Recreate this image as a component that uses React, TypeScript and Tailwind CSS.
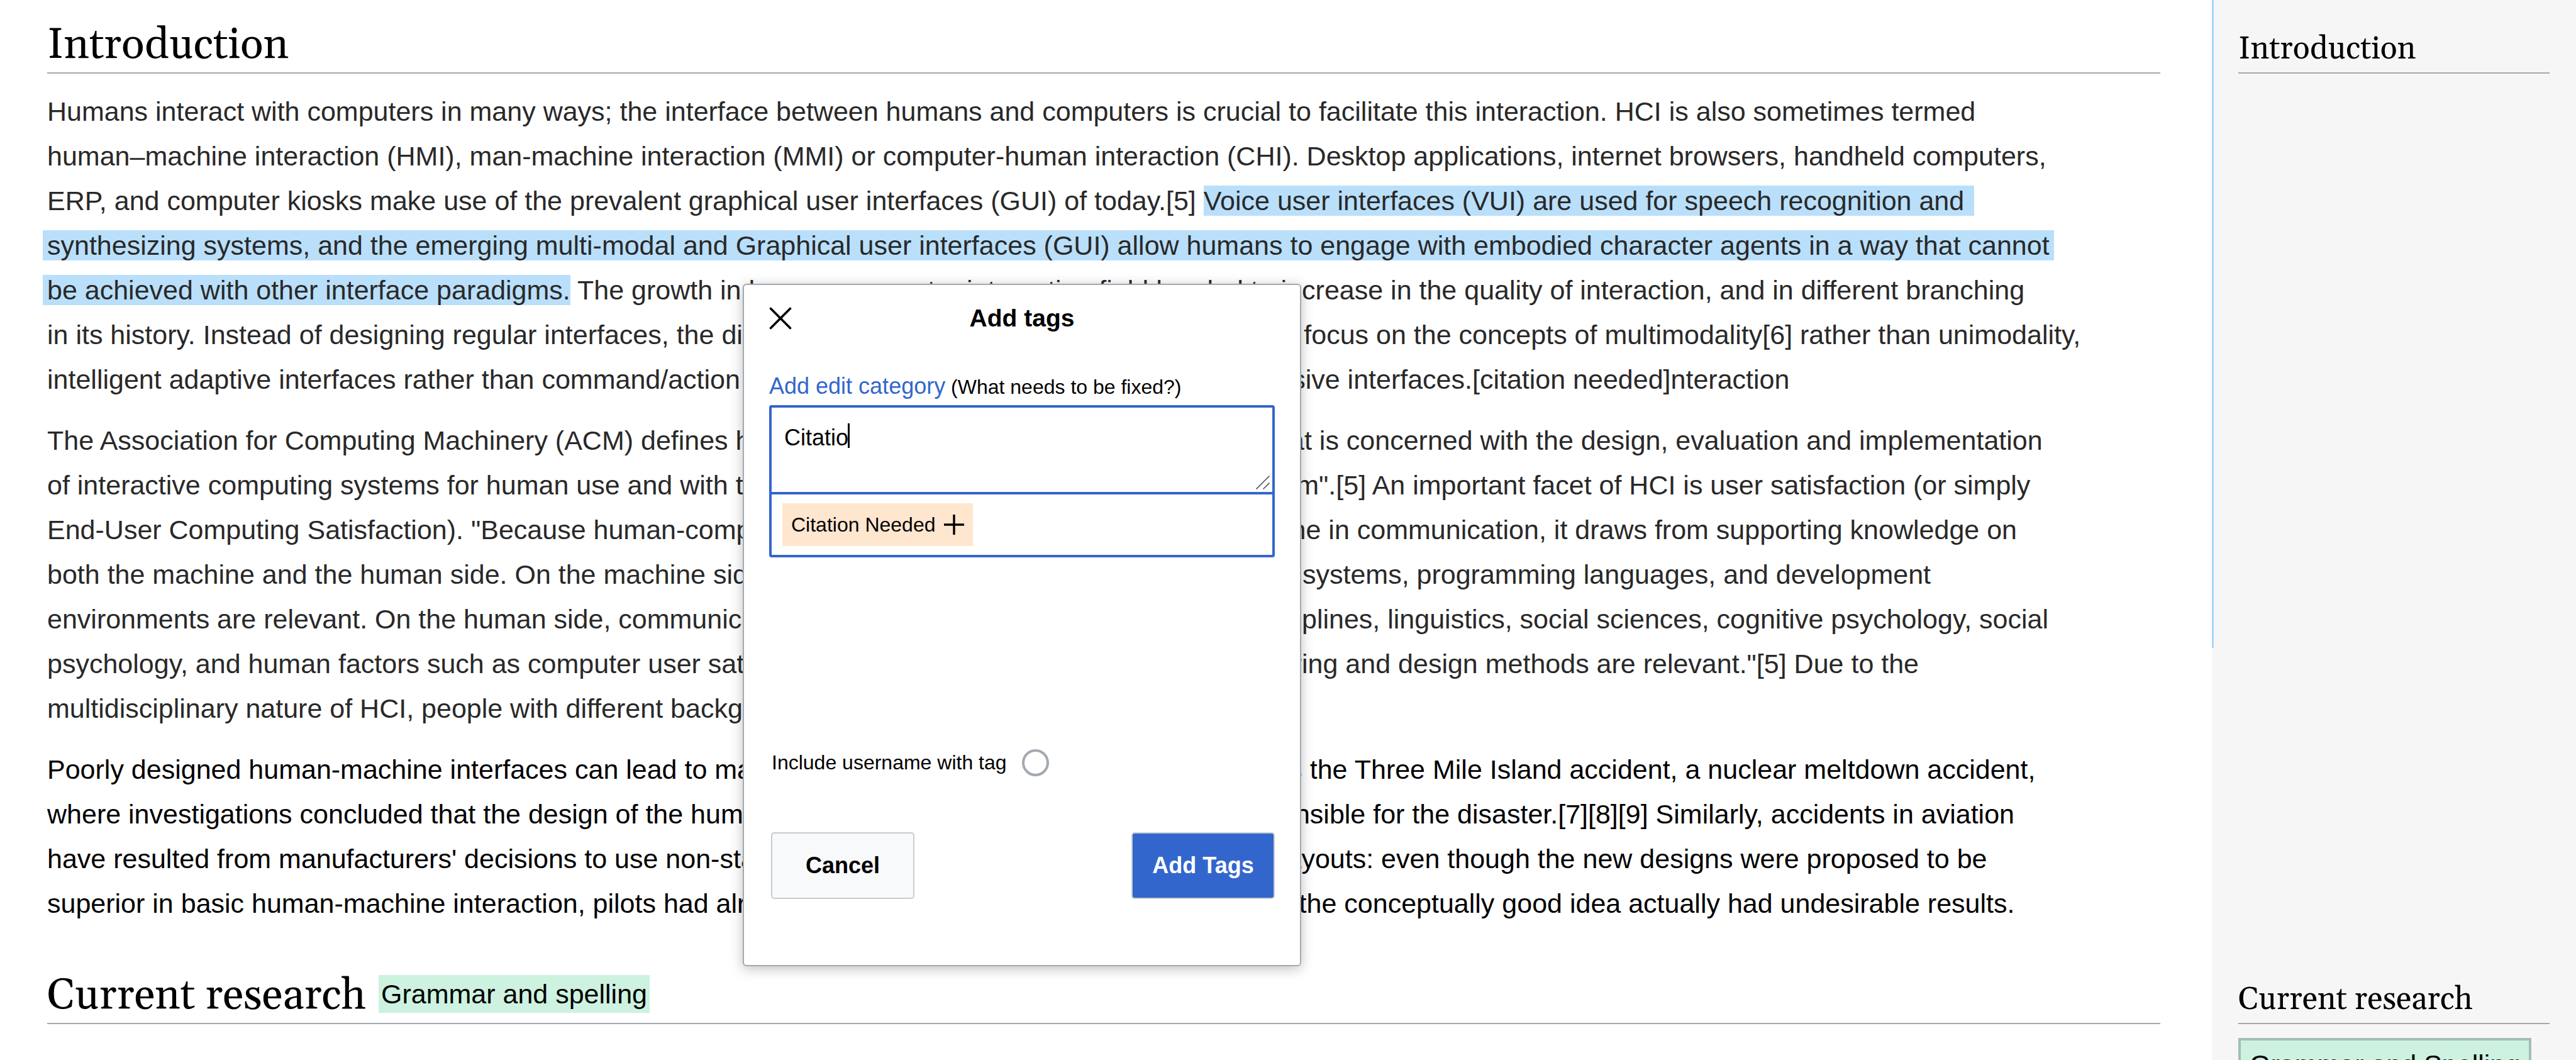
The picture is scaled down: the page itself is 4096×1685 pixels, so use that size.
import type { ReactNode } from "react";

const sans = 'font-["Liberation_Sans",Arial,sans-serif]';
const serif = 'font-["Gelasio","Liberation_Serif",serif]';

function MainHeading({ title, children }: { title: string; children?: ReactNode }) {
  return (
    <header className="flex h-[117px] items-end gap-5 border-b-2 border-[#a2a9b1]">
      <h2 className={`${serif} pb-[9px] text-[68px] leading-none whitespace-nowrap`}>{title}</h2>
      {children}
    </header>
  );
}

function SideHeading({ title }: { title: string }) {
  return (
    <header className="flex h-[117px] items-end border-b-2 border-[#a2a9b1]">
      <h3 className={`${serif} pb-[11px] text-[50px] leading-none whitespace-nowrap`}>{title}</h3>
    </header>
  );
}

function Lines({ lines }: { lines: ReactNode[] }) {
  return (
    <>
      {lines.map((line, i) => (
        <span key={i} className="block">
          {line}
        </span>
      ))}
    </>
  );
}

const introLines: ReactNode[] = [
  "Humans interact with computers in many ways; the interface between humans and computers is crucial to facilitate this interaction. HCI is also sometimes termed",
  "human–machine interaction (HMI), man-machine interaction (MMI) or computer-human interaction (CHI). Desktop applications, internet browsers, handheld computers,",
  <>
    ERP, and computer kiosks make use of the prevalent graphical user interfaces (GUI) of today.[5]{" "}
    <mark className="bg-[#b9dffa] pr-4 text-inherit">
      Voice user interfaces (VUI) are used for speech recognition and
    </mark>
  </>,
  <mark className="-ml-[7px] bg-[#b9dffa] px-[7px] text-inherit">
    synthesizing systems, and the emerging multi-modal and Graphical user interfaces (GUI) allow humans to engage
    with embodied character agents in a way that cannot
  </mark>,
  <>
    <mark className="-ml-[7px] bg-[#b9dffa] pl-[7px] text-inherit">be achieved with other interface paradigms.</mark>{" "}
    The growth in human–computer interaction field has led to increase in the quality of interaction, and in different
    branching
  </>,
  "in its history. Instead of designing regular interfaces, the different research branches have had a different focus on the concepts of multimodality[6] rather than unimodality,",
  "intelligent adaptive interfaces rather than command/action based ones, and finally active rather than passive interfaces.[citation needed]nteraction",
];

const acmLines = [
  'The Association for Computing Machinery (ACM) defines human-computer interaction as "a discipline that is concerned with the design, evaluation and implementation',
  'of interactive computing systems for human use and with the study of major phenomena surrounding them".[5] An important facet of HCI is user satisfaction (or simply',
  'End-User Computing Satisfaction). "Because human-computer interaction studies a human and a machine in communication, it draws from supporting knowledge on',
  "both the machine and the human side. On the machine side, techniques in computer graphics, operating systems, programming languages, and development",
  "environments are relevant. On the human side, communication theory, graphic and industrial design disciplines, linguistics, social sciences, cognitive psychology, social",
  'psychology, and human factors such as computer user satisfaction are relevant. And, of course, engineering and design methods are relevant."[5] Due to the',
  "multidisciplinary nature of HCI, people with different backgrounds contribute to its success.",
];

const designLines = [
  "Poorly designed human-machine interfaces can lead to many unexpected problems. A classic example is the Three Mile Island accident, a nuclear meltdown accident,",
  "where investigations concluded that the design of the human-machine interface was at least partly responsible for the disaster.[7][8][9] Similarly, accidents in aviation",
  "have resulted from manufacturers' decisions to use non-standard flight instruments or throttle quadrant layouts: even though the new designs were proposed to be",
  'superior in basic human-machine interaction, pilots had already ingrained the "standard" layout and thus the conceptually good idea actually had undesirable results.',
];

function AddTagsDialog() {
  return (
    <div
      role="dialog"
      aria-labelledby="dialog-title"
      className="absolute top-[451px] left-[1181px] flex w-[888px] flex-col rounded-md border-2 border-[#a2a9b1] bg-white px-10 pt-[29px] pb-[105px] shadow-[0_4px_20px_rgba(0,0,0,0.25)]"
    >
      <div className="grid grid-cols-[36px_1fr_36px] items-center">
        <button type="button" aria-label="Close">
          <svg viewBox="0 0 36 36" className="size-9" fill="none" stroke="black" strokeWidth="3.6" strokeLinecap="round">
            <path d="M2.5 2.5L33.5 33.5M33.5 2.5L2.5 33.5" />
          </svg>
        </button>
        <h1 id="dialog-title" className="text-center text-[39px] leading-[48px] font-bold">
          Add tags
        </h1>
      </div>

      <label htmlFor="category" className="mt-[60px] text-[32px] leading-[48px] whitespace-nowrap">
        <span className="text-[36px] text-[#3366cc]">Add edit category</span> (What needs to be fixed?)
      </label>

      <div className="mt-[5px] rounded-[4px] border-4 border-[#3366cc]">
        <div className="relative border-b-4 border-[#3366cc]">
          <textarea
            id="category"
            defaultValue="Citatio"
            className="block h-[134px] w-full resize-none bg-white pt-[27px] pl-5 text-[36px] leading-[41px] outline-none"
          />
          <span className="absolute top-[25px] left-[121px] h-[39px] w-[3px] bg-black" />
          <svg
            viewBox="0 0 22 22"
            className="absolute right-1 bottom-1 size-[22px]"
            fill="none"
            stroke="#54595d"
            strokeWidth="1.6"
          >
            <path d="M0.5 21.5L21.5 0.5M11.5 21.5L21.5 11.5" />
          </svg>
        </div>
        <div className="flex px-[17px] py-[14px]">
          <button
            type="button"
            className="flex h-[68px] items-center gap-[14px] bg-[#ffe6cf] px-[14px] text-[32px] leading-none"
          >
            Citation Needed
            <svg viewBox="0 0 32 32" className="size-8" fill="none" stroke="black" strokeWidth="3.4">
              <path d="M16 0V32M0 16H32" />
            </svg>
          </button>
        </div>
      </div>

      <div className="mt-[305px] flex items-center gap-6 pl-1">
        <label htmlFor="include-username" className="text-[32px] leading-[43px]">
          Include username with tag
        </label>
        <input
          id="include-username"
          type="radio"
          className="size-[43px] appearance-none rounded-full border-[4px] border-[#a2a9b1] bg-white"
        />
      </div>

      <div className="mt-[89px] flex justify-between pl-[3px]">
        <button
          type="button"
          className="h-[106px] w-[228px] rounded-[5px] border-2 border-[#c8ccd1] bg-[#f8f9fa] text-[36px] font-bold"
        >
          Cancel
        </button>
        <button
          type="button"
          className="h-[106px] w-[228px] rounded-[5px] border-2 border-[#c8ccd1] bg-[#3366cc] text-[36px] font-bold text-white"
        >
          Add Tags
        </button>
      </div>
    </div>
  );
}

export default function App() {
  return (
    <div
      className={`${sans} relative grid h-screen grid-cols-[1fr_579px] grid-rows-[auto_1fr] overflow-hidden bg-white text-black`}
    >
      <section className="pr-[82px] pb-[39px] pl-[75px]">
        <MainHeading title="Introduction" />
        <div className="mt-[25px] flex flex-col gap-[26px] text-[43px] leading-[71px] whitespace-nowrap">
          <p className="text-[#292929]">
            <Lines lines={introLines} />
          </p>
          <p className="text-[#292929]">
            <Lines lines={acmLines} />
          </p>
          <p>
            <Lines lines={designLines} />
          </p>
        </div>
      </section>

      <aside className="relative bg-[#f6f6f6] px-[42px]">
        <span className="absolute top-0 left-0 h-[1030px] w-[3px] bg-[#a6d5fa]" />
        <SideHeading title="Introduction" />
      </aside>

      <section className="pr-[82px] pl-[75px]">
        <MainHeading title="Current research">
          <span className="mb-4 bg-[#cdf2e0] px-1 text-[43px] leading-[60px] whitespace-nowrap">
            Grammar and spelling
          </span>
        </MainHeading>
      </section>

      <aside className="min-h-0 bg-[#f6f6f6] px-[42px]">
        <SideHeading title="Current research" />
        <span className="mt-[22px] inline-block border-4 border-[#a2bfb1] bg-[#cdf2e0] px-[14px] py-2 text-[43px] leading-[60px] whitespace-nowrap">
          Grammar and Spelling
        </span>
      </aside>

      <AddTagsDialog />
    </div>
  );
}
